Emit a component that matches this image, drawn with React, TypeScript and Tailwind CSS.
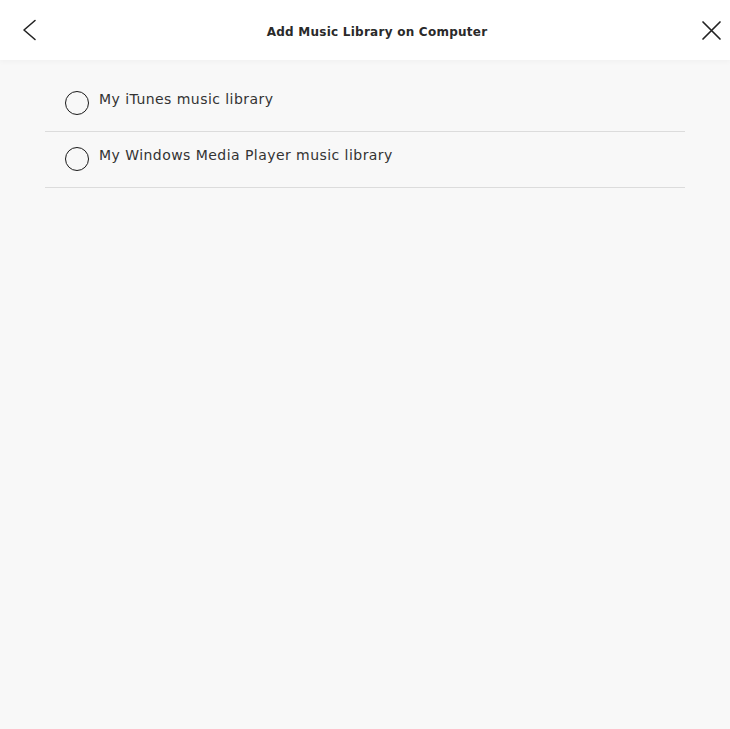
const options = ["My iTunes music library", "My Windows Media Player music library"];

export default function App() {
  return (
    <div className="flex h-[729px] w-[730px] flex-col bg-[#f8f8f8]" style={{ fontFamily: "'DejaVu Sans', sans-serif" }}>
      <header className="relative z-10 flex h-[60px] shrink-0 items-center justify-between bg-white pl-[20px] pr-[6px] shadow-[0_2px_5px_rgba(0,0,0,0.03)]">
        <button className="flex size-[24px] items-center justify-center" aria-label="Back">
          <svg width="24" height="24" viewBox="0 0 24 24" fill="none" stroke="#222" strokeWidth="1.6" strokeLinecap="round" strokeLinejoin="round">
            <path d="M15 2.5 L4 12 L15 21.5" />
          </svg>
        </button>
        <h1 className="ml-[10px] mt-[3px] text-[12px] font-bold tracking-[0.25px] text-[#2a2a2a]">Add Music Library on Computer</h1>
        <button className="mt-[2px] flex size-[24px] items-center justify-center" aria-label="Close">
          <svg width="24" height="24" viewBox="0 0 24 24" fill="none" stroke="#222" strokeWidth="1.7" strokeLinecap="round">
            <path d="M3 3 L20 20 M20 3 L3 20" />
          </svg>
        </button>
      </header>

      <ul className="mx-[45px] mt-[16px]">
        {options.map((label) => (
          <li key={label} className="flex h-[56px] items-start border-b border-[#dcdcdc] pl-[20px] pt-[15px]">
            <span className="block size-[24px] shrink-0 rounded-full border-[1.5px] border-[#1a1a1a]" />
            <span className="ml-[10px] -mt-[2px] text-[14px] tracking-[0.45px] text-[#333]">{label}</span>
          </li>
        ))}
      </ul>
    </div>
  );
}
